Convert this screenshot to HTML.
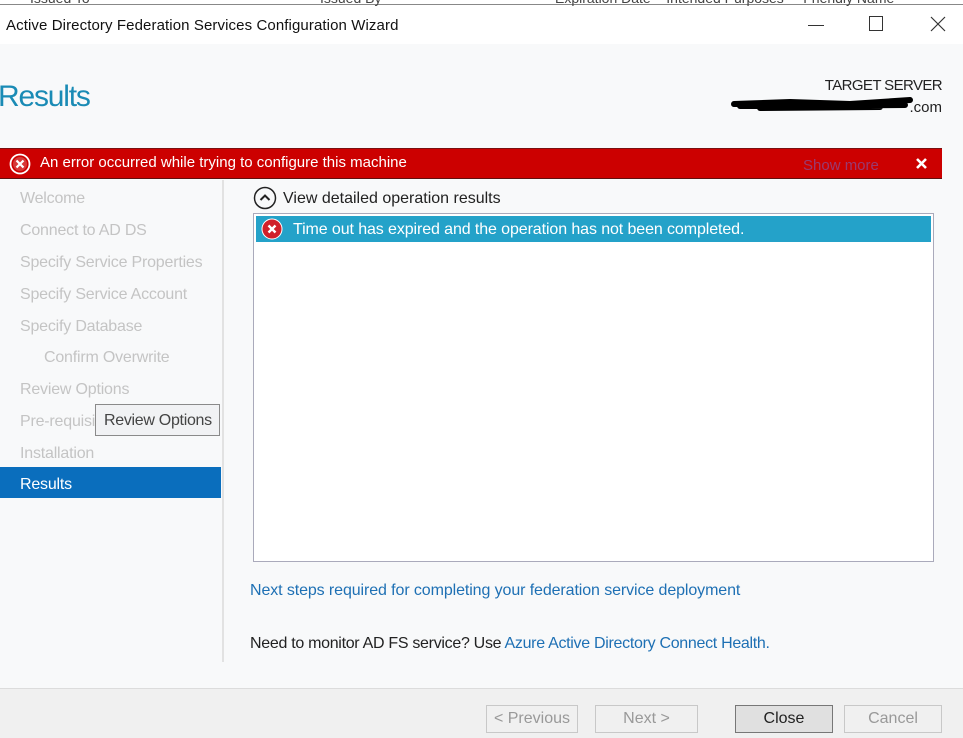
<!DOCTYPE html>
<html><head><meta charset="utf-8"><style>
*{margin:0;padding:0;box-sizing:border-box}
body{width:963px;height:738px;overflow:hidden;background:#f8f9fa;font-family:"Liberation Sans",sans-serif;position:relative;color:#222}
.a{position:absolute;white-space:nowrap}
.nav{position:absolute;left:20px;font-size:16px;color:#c4c4c4;letter-spacing:-0.2px}
.btn{position:absolute;top:705px;height:28px;border:1px solid #c8c8c8;background:#f0f0f0;font-size:16px;color:#999;text-align:center;line-height:26px}
</style></head><body>
<div class="a" style="left:0;top:0;width:963px;height:44px;background:#fff"></div>
<div class="a" style="left:0;top:4px;width:963px;height:1px;background:#888"></div>
<div class="a" style="left:30px;top:-10px;font-size:14px;color:#444">Issued To</div>
<div class="a" style="left:320px;top:-10px;font-size:14px;color:#444">Issued By</div>
<div class="a" style="left:555px;top:-10px;font-size:14px;color:#444">Expiration Date&nbsp;&nbsp;&nbsp;&nbsp;Intended Purposes&nbsp;&nbsp;&nbsp;&nbsp;&nbsp;Friendly Name</div>
<div class="a" style="left:6px;top:17px;font-size:15px;color:#111;letter-spacing:0.1px">Active Directory Federation Services Configuration Wizard</div>
<div class="a" style="left:808px;top:25px;width:16px;height:1px;background:#333"></div>
<div class="a" style="left:869px;top:16px;width:14px;height:15px;border:1px solid #333"></div>
<svg class="a" style="left:930px;top:16px" width="16" height="16"><path d="M1 1L15 15M15 1L1 15" stroke="#333" stroke-width="1.2"/></svg>
<div class="a" style="left:-2px;top:80px;font-size:30px;color:#1a8bb5;letter-spacing:-1.2px">Results</div>
<div class="a" style="right:21px;top:77px;font-size:15px;color:#222;letter-spacing:-0.6px">TARGET SERVER</div>
<div class="a" style="right:21px;top:99px;font-size:15px;color:#222">.com</div>
<svg class="a" style="left:730px;top:94px" width="185" height="20"><path d="M4 10 L60 8 L120 10 L180 6 M10 12 L175 11 M30 14 L150 13" stroke="#000" stroke-width="6" stroke-linecap="round"/></svg>
<div class="a" style="left:0;top:148px;width:942px;height:31px;background:#cc0000;border-top:1px solid #7a1010;border-bottom:1px solid #601010"></div>
<svg class="a" style="left:9px;top:153px" width="22" height="22"><circle cx="11" cy="11" r="9.5" fill="none" stroke="#fff" stroke-width="1.8"/><circle cx="11" cy="11" r="7" fill="#e8a0a0" opacity=".35"/><path d="M7.5 7.5L14.5 14.5M14.5 7.5L7.5 14.5" stroke="#fff" stroke-width="2.2"/></svg>
<div class="a" style="left:40px;top:154px;font-size:15px;color:#fff">An error occurred while trying to configure this machine</div>
<div class="a" style="left:803px;top:157px;font-size:15px;color:#9a3a70">Show more</div>
<svg class="a" style="left:915px;top:157px" width="13" height="13"><path d="M2 2L11 11M11 2L2 11" stroke="#fff" stroke-width="2.6"/></svg>
<div class="nav" style="top:190px">Welcome</div>
<div class="nav" style="top:222px">Connect to AD DS</div>
<div class="nav" style="top:254px">Specify Service Properties</div>
<div class="nav" style="top:286px">Specify Service Account</div>
<div class="nav" style="top:318px">Specify Database</div>
<div class="nav" style="top:349px;left:44px">Confirm Overwrite</div>
<div class="nav" style="top:381px">Review Options</div>
<div class="nav" style="top:413px">Pre-requisites</div>
<div class="nav" style="top:445px">Installation</div>
<div class="a" style="left:0;top:467px;width:221px;height:31px;background:#0a6ebd"></div>
<div class="nav" style="top:476px;color:#fff">Results</div>
<div class="a" style="left:95px;top:404px;width:125px;height:32px;background:#f1f2f4;border:1px solid #8a8a8a;font-size:16px;color:#444;line-height:31px;padding-left:8px;letter-spacing:-0.3px">Review Options</div>
<div class="a" style="left:222px;top:180px;width:2px;height:482px;background:#e2e2e2"></div>
<svg class="a" style="left:253px;top:186px" width="24" height="24"><circle cx="12" cy="12" r="10.5" fill="none" stroke="#222" stroke-width="1.5"/><path d="M7.5 14L12 9.5L16.5 14" fill="none" stroke="#222" stroke-width="2"/></svg>
<div class="a" style="left:283px;top:190px;font-size:16px;color:#222">View detailed operation results</div>
<div class="a" style="left:253px;top:213px;width:681px;height:349px;background:#fff;border:1px solid #aab"></div>
<div class="a" style="left:256px;top:216px;width:675px;height:26px;background:#24a2c9"></div>
<svg class="a" style="left:261px;top:218px" width="22" height="22"><circle cx="11" cy="11" r="10" fill="#d0202a" stroke="#fff" stroke-width="1"/><path d="M7.5 7.5L14.5 14.5M14.5 7.5L7.5 14.5" stroke="#fff" stroke-width="2.4"/></svg>
<div class="a" style="left:293px;top:221px;font-size:16px;color:#fff;letter-spacing:-0.1px">Time out has expired and the operation has not been completed.</div>
<div class="a" style="left:250px;top:582px;font-size:16px;color:#1e70b4;letter-spacing:-0.1px">Next steps required for completing your federation service deployment</div>
<div class="a" style="left:250px;top:635px;font-size:16px;color:#222;letter-spacing:-0.3px">Need to monitor AD FS service? Use <span style="color:#1e70b4">Azure Active Directory Connect Health.</span></div>
<div class="a" style="left:0;top:688px;width:963px;height:50px;background:#f0f0f0;border-top:1px solid #dcdcdc"></div>
<div class="btn" style="left:486px;width:92px">&lt; Previous</div>
<div class="btn" style="left:595px;width:103px">Next &gt;</div>
<div class="btn" style="left:735px;width:98px;background:#e0e0e0;border-color:#777;color:#222">Close</div>
<div class="btn" style="left:844px;width:98px">Cancel</div>
</body></html>
